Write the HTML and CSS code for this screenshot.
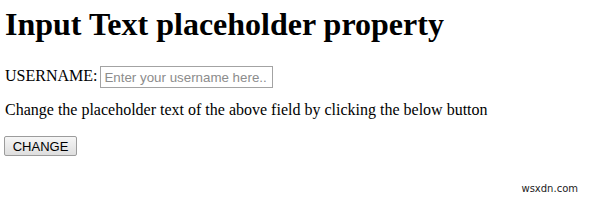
FILE: index.html
```html
<!DOCTYPE html>
<html>
<head>
  <meta charset="UTF-8">
  <title>Input Text placeholder property</title>
  <link rel="stylesheet" href="styles.css">
</head>
<body>
  <h1>Input Text placeholder property</h1>
  <form class="user-row">
    <label for="userName">USERNAME:</label>
    <input type="text" id="userName" placeholder="Enter your username here..">
  </form>
  <p>Change the placeholder text of the above field by clicking the below button</p>
  <button type="button" id="changeBtn">CHANGE</button>
  <div class="watermark">wsxdn.com</div>

  <script>
    document.getElementById("changeBtn").addEventListener("click", () => {
      document.getElementById("userName").placeholder = "Enter your name here..";
    });
  </script>
</body>
</html>
```

FILE: styles.css
```css
html, body { height: 100%; }
body {
  margin: 0; padding: 0 5px; position: relative;
  font-family: "Liberation Serif", "Times New Roman", serif; font-size: 16px;
  color: #000; background: #fff;
}
h1 { font-size: 32px; font-weight: bold; margin: 6px 0 0; line-height: 37px; }
.user-row { margin: 22px 0 0; line-height: 22px; }
.user-row input {
  width: 173px; height: 22px; padding: 1px 3px; margin: 0 0 0 -1px;
  border: 1px solid #a3a3a3; box-sizing: border-box; vertical-align: middle;
  font-family: "Liberation Sans", Arial, sans-serif; font-size: 13.33px; color: #000;
}
.user-row input::placeholder { color: #8c8c8c; }
p { margin: 13px 0 0; line-height: 18px; }
button {
  margin: 17px 0 0 -1px; height: 20px; padding: 0 6px; width: 73px;
  font-family: "Liberation Sans", Arial, sans-serif; font-size: 13px; color: #000;
  border: 1px solid #9c9c9c; border-radius: 2px;
  background: linear-gradient(#f6f6f6, #dedede);
}
.watermark {
  position: absolute; right: 22px; bottom: 16px;
  font-family: "DejaVu Sans", Verdana, sans-serif; font-size: 10px; color: #222;
}
```
